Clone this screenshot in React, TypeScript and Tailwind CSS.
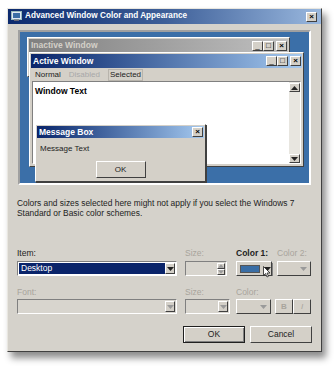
import React from "react";

const raised =
  "border border-t-white border-l-white border-r-[#404040] border-b-[#404040] bg-[#d4d0c8]";
const sunken =
  "border border-t-[#808080] border-l-[#808080] border-r-white border-b-white";

function CapButton({ glyph, bold }: { glyph: string; bold?: boolean }) {
  return (
    <div
      className={`${raised} flex h-[10px] w-[11px] items-center justify-center text-[8px] leading-none text-black ${bold ? "font-bold" : ""}`}
    >
      {glyph}
    </div>
  );
}

function CapButtons() {
  return (
    <div className="flex items-center">
      <CapButton glyph="_" />
      <CapButton glyph="□" bold />
      <div className="w-[2px]" />
      <CapButton glyph="×" bold />
    </div>
  );
}

function Arrow({ up, dim }: { up?: boolean; dim?: boolean }) {
  return (
    <svg width="7" height="4" viewBox="0 0 7 4">
      <path d={up ? "M0 4 L3.5 0 L7 4 Z" : "M0 0 L7 0 L3.5 4 Z"} fill={dim ? "#9a9a9a" : "#222"} />
    </svg>
  );
}

function DropButton({ dim }: { dim?: boolean }) {
  return (
    <div className={`${raised} flex h-full w-[10px] items-center justify-center`}>
      <Arrow dim={dim} />
    </div>
  );
}

function Preview() {
  return (
    <div className="relative mx-[10px] mt-[6px] h-[155px] border-2 border-t-[#a0a0a0] border-l-[#a0a0a0] border-r-white border-b-white bg-[#3b6fa8]">
      {/* inactive window */}
      <div className={`${raised} absolute left-[7px] top-[5px] h-[40px] w-[263px] p-[1px]`}>
        <div className="flex h-[13px] items-center justify-between bg-gradient-to-r from-[#808080] to-[#c0c0c0] pl-[2px] pr-[1px]">
          <span className="text-[8.5px] font-bold text-[#d4d0c8]">Inactive Window</span>
          <CapButtons />
        </div>
      </div>

      {/* active window */}
      <div className={`${raised} absolute left-[9px] top-[20px] flex h-[115px] w-[275px] flex-col p-[1px]`}>
        <div className="flex h-[14px] items-center justify-between bg-gradient-to-r from-[#0a246a] to-[#a6caf0] pl-[2px] pr-[1px]">
          <span className="text-[8.5px] font-bold text-white">Active Window</span>
          <CapButtons />
        </div>
        <div className="flex h-[13px] items-center gap-[8px] px-[4px] text-[8px] text-[#222]">
          <span>Normal</span>
          <span className="text-[#a8a8a8]">Disabled</span>
          <span className="border border-[#b8b4ac] px-[1px] leading-[10px]">Selected</span>
        </div>
        <div className={`${sunken} mx-[1px] mb-[1px] flex flex-1 bg-white`}>
          <div className="flex-1 px-[2px] pt-[3px] text-[8.5px] font-bold text-black">Window Text</div>
          <div className="flex w-[11px] flex-col justify-between bg-[#e8e6e0] pt-[1px]">
            <div className={`${raised} flex h-[9px] items-center justify-center`}>
              <Arrow up />
            </div>
            <div className={`${raised} flex h-[9px] items-center justify-center`}>
              <Arrow />
            </div>
          </div>
        </div>
      </div>

      {/* message box */}
      <div className={`${raised} absolute left-[15px] top-[92px] flex h-[58px] w-[171px] flex-col p-[1px] shadow-[1px_1px_0_#404040]`}>
        <div className="flex h-[12px] items-center justify-between bg-gradient-to-r from-[#0a246a] to-[#a6caf0] pl-[2px] pr-[1px]">
          <span className="text-[8.5px] font-bold text-white">Message Box</span>
          <CapButton glyph="×" bold />
        </div>
        <div className="px-[3px] pt-[5px] text-[8px] text-[#222]">Message Text</div>
        <div className="mt-auto mb-[2px] flex justify-center">
          <div className={`${raised} flex h-[17px] w-[50px] items-center justify-center border-r-[#202020] border-b-[#202020] text-[8px] text-[#222]`}>
            OK
          </div>
        </div>
      </div>
    </div>
  );
}

function Label({ children, dim, bold, w }: { children: React.ReactNode; dim?: boolean; bold?: boolean; w: string }) {
  return (
    <div className={`${w} text-[8.5px] leading-[10px] ${dim ? "text-[#a8a49c]" : "text-[#222]"} ${bold ? "font-bold" : ""}`}>
      {children}
    </div>
  );
}

export default function App() {
  return (
    <div className="h-[366px] w-[335px] bg-white pl-[7px] pt-[8px] [font-family:'Liberation_Sans',Arial,sans-serif]">
      <div className="flex h-[344px] w-[315px] flex-col border border-t-[#e8e6e0] border-l-[#e8e6e0] border-r-[#404040] border-b-[#404040] bg-[#d5d2cb] shadow-[4px_6px_7px_rgba(0,0,0,0.45)]">
        {/* title bar */}
        <div className="flex h-[15px] items-center justify-between bg-gradient-to-r from-[#0c2a6e] via-[#3e5f98] to-[#9ab8de] pl-[3px] pr-[4px]">
          <div className="flex items-center gap-[3px]">
            <svg width="11" height="10" viewBox="0 0 11 10">
              <rect x="0.5" y="0.5" width="10" height="8" fill="#dfe8f4" stroke="#9bb" />
              <rect x="2" y="2" width="7" height="5" fill="#3a6ea5" />
              <rect x="3" y="8.5" width="5" height="1.5" fill="#667" />
            </svg>
            <span className="text-[8.2px] font-bold text-white">Advanced Window Color and Appearance</span>
          </div>
          <CapButton glyph="×" bold />
        </div>

        <Preview />

        <p className="mt-[13px] px-[9px] text-[8.4px] leading-[10px] text-[#222]">
          Colors and sizes selected here might not apply if you select the Windows 7
          <br />
          Standard or Basic color schemes.
        </p>

        {/* item row */}
        <div className="mt-[30px] flex px-[9px]">
          <Label w="w-[168px]">Item:</Label>
          <Label w="w-[51px]" dim>Size:</Label>
          <Label w="w-[41px]" bold>Color 1:</Label>
          <Label w="w-[34px]" dim>Color 2:</Label>
        </div>
        <div className="mt-[3px] flex h-[15px] px-[9px]">
          <div className={`${sunken} flex w-[160px] items-stretch bg-white p-[1px]`}>
            <div className="flex flex-1 items-center bg-[#0a246a] px-[2px] text-[8.5px] text-white">Desktop</div>
            <DropButton />
          </div>
          <div className="w-[8px]" />
          <div className={`${sunken} flex w-[42px] justify-end bg-[#d8d5ce] p-[1px]`}>
            <div className="flex w-[8px] flex-col">
              <div className={`${raised} flex flex-1 items-center justify-center`}>
                <Arrow up dim />
              </div>
              <div className={`${raised} flex flex-1 items-center justify-center`}>
                <Arrow dim />
              </div>
            </div>
          </div>
          <div className="w-[9px]" />
          <div className={`${raised} relative flex w-[36px] items-center gap-[4px] border-r-[#202020] border-b-[#202020] pl-[3px]`}>
            <div className="h-[8px] w-[20px] border border-[#555] bg-[#3a6ea5]" />
            <Arrow />
            <div className="absolute right-[-2px] top-[1px] h-[13px] w-[1px] bg-[#808080]" />
            <svg className="absolute left-[26px] top-[4px]" width="8" height="12" viewBox="0 0 8 12">
              <path d="M0.5 0.5 L0.5 9.5 L2.5 7.5 L4 11 L5.5 10.3 L4 7 L7 7 Z" fill="white" stroke="#222" strokeWidth="0.8" />
            </svg>
          </div>
          <div className="w-[5px]" />
          <div className={`${raised} flex w-[34px] items-center justify-end pr-[3px]`}>
            <Arrow dim />
          </div>
        </div>

        {/* font row */}
        <div className="mt-[11px] flex px-[9px]">
          <Label w="w-[168px]" dim>Font:</Label>
          <Label w="w-[51px]" dim>Size:</Label>
          <Label w="w-[41px]" dim>Color:</Label>
        </div>
        <div className="mt-[2px] flex h-[15px] px-[9px]">
          <div className={`${sunken} flex w-[160px] justify-end bg-[#d8d5ce] p-[1px]`}>
            <DropButton dim />
          </div>
          <div className="w-[8px]" />
          <div className={`${sunken} flex w-[45px] justify-end bg-[#d8d5ce] p-[1px]`}>
            <DropButton dim />
          </div>
          <div className="w-[6px]" />
          <div className={`${raised} flex w-[35px] items-center justify-end pr-[3px]`}>
            <Arrow dim />
          </div>
          <div className="w-[4px]" />
          <div className={`${raised} flex w-[18px] items-center justify-center text-[8px] font-bold text-[#a8a49c]`}>B</div>
          <div className={`${raised} flex w-[18px] items-center justify-center text-[8px] italic text-[#a8a49c]`}>I</div>
        </div>

        {/* buttons */}
        <div className="mt-[12px] flex justify-end gap-[5px] pr-[9px]">
          <div className="flex h-[17px] w-[62px] items-center justify-center border border-[#202020] bg-[#d4d0c8] text-[8.5px] text-[#222] shadow-[inset_1px_1px_0_white,inset_-1px_-1px_0_#808080]">
            OK
          </div>
          <div className={`${raised} flex h-[17px] w-[62px] items-center justify-center border-r-[#202020] border-b-[#202020] text-[8.5px] text-[#222]`}>
            Cancel
          </div>
        </div>
      </div>
    </div>
  );
}
